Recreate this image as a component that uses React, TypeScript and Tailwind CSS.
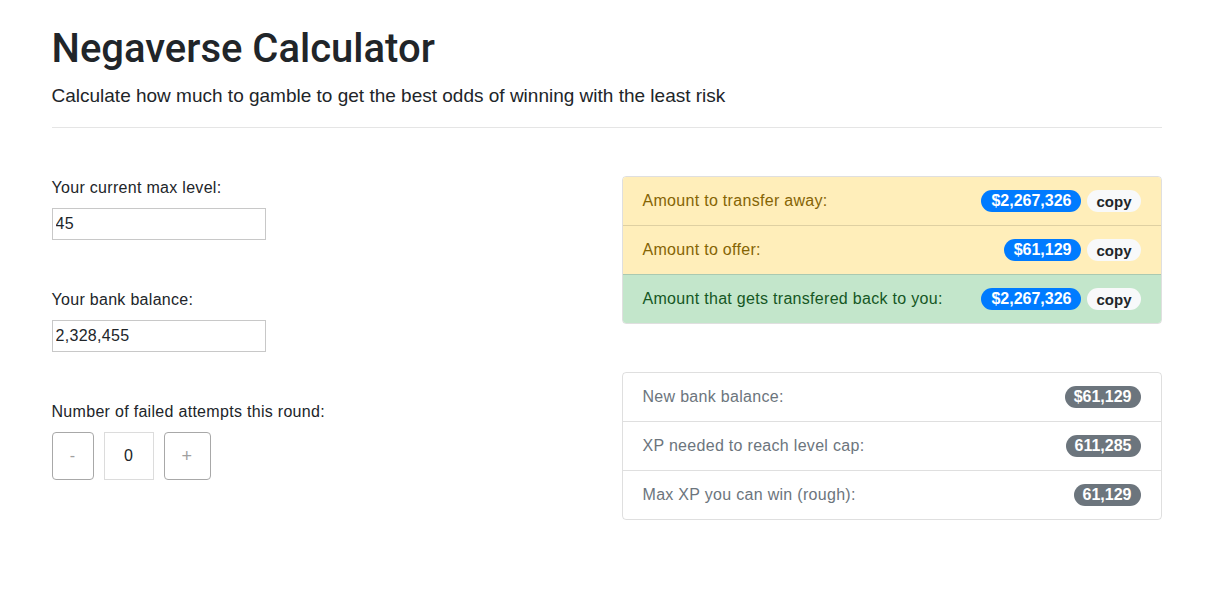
import React from "react";

const font = "font-['Liberation_Sans',Arial,sans-serif]";

function Badge({ children, tone }: { children: React.ReactNode; tone: "blue" | "light" | "gray" }) {
  const cls =
    tone === "blue"
      ? "bg-[#007bff] text-white text-[16px] px-[10px]"
      : tone === "gray"
        ? "bg-[#6c757d] text-white text-[16px] px-[9px]"
        : "bg-[#f8f9fa] text-[#212529] text-[15px] px-[9px]";
  return (
    <span className={`inline-flex items-center h-[22px] rounded-full font-bold leading-none ${cls}`}>
      {children}
    </span>
  );
}

export default function App() {
  const resultRows = [
    { label: "Amount to transfer away:", value: "$2,267,326", bg: "bg-[#ffeeba] text-[#856404]" },
    { label: "Amount to offer:", value: "$61,129", bg: "bg-[#ffeeba] text-[#856404]" },
    { label: "Amount that gets transfered back to you:", value: "$2,267,326", bg: "bg-[#c3e6cb] text-[#155724]" },
  ];
  const infoRows = [
    { label: "New bank balance:", value: "$61,129" },
    { label: "XP needed to reach level cap:", value: "611,285" },
    { label: "Max XP you can win (rough):", value: "61,129" },
  ];

  return (
    <div className={`${font} min-h-screen bg-white text-[#212529] text-[16px] tracking-[0.3px]`}>
      <div className="mx-auto w-[1110px] pt-[25px]">
        <h1 className="font-['Roboto',sans-serif] text-[40px] leading-[48px] font-medium tracking-normal mb-2">
          Negaverse Calculator
        </h1>
        <p className="text-[19px] leading-[30px] tracking-normal mb-4">
          Calculate how much to gamble to get the best odds of winning with the least risk
        </p>
        <hr className="border-t border-[#e5e5e5] mb-12" />

        <div className="grid grid-cols-2 gap-[30px]">
          <div>
            <label className="block leading-6 mb-2">Your current max level:</label>
            <input
              defaultValue="45"
              className="block w-[214px] h-8 border border-[#c8c8c8] px-[3px] text-[16px] outline-none"
            />
            <label className="block leading-6 mb-2 mt-12">Your bank balance:</label>
            <input
              defaultValue="2,328,455"
              className="block w-[214px] h-8 border border-[#c8c8c8] px-[3px] text-[16px] outline-none"
            />
            <label className="block leading-6 mb-2 mt-12">Number of failed attempts this round:</label>
            <div className="flex gap-[10px]">
              <button className="w-[42px] h-12 border border-[#a8a8a8] rounded-[4px] text-[#a0a0a0] text-[16px]">-</button>
              <div className="w-[50px] h-12 border border-[#dcdcdc] flex items-center justify-center">0</div>
              <button className="w-[47px] h-12 border border-[#a8a8a8] rounded-[4px] text-[#a0a0a0] text-[18px]">+</button>
            </div>
          </div>

          <div>
            <div className="border border-black/[0.125] rounded-[4px] overflow-hidden">
              {resultRows.map((r, i) => (
                <div
                  key={r.label}
                  className={`flex items-center justify-between px-5 ${i > 0 ? "h-[49px] border-t border-black/[0.125]" : "h-12"} ${r.bg}`}
                >
                  <span>{r.label}</span>
                  <span className="flex gap-[6px] tracking-normal">
                    <Badge tone="blue">{r.value}</Badge>
                    <Badge tone="light">copy</Badge>
                  </span>
                </div>
              ))}
            </div>

            <div className="mt-12 border border-black/[0.125] rounded-[4px] overflow-hidden">
              {infoRows.map((r, i) => (
                <div
                  key={r.label}
                  className={`flex items-center justify-between px-5 text-[#6c757d] ${i > 0 ? "h-[49px] border-t border-black/[0.125]" : "h-12"}`}
                >
                  <span>{r.label}</span>
                  <span className="tracking-normal">
                    <Badge tone="gray">{r.value}</Badge>
                  </span>
                </div>
              ))}
            </div>
          </div>
        </div>
      </div>
    </div>
  );
}
